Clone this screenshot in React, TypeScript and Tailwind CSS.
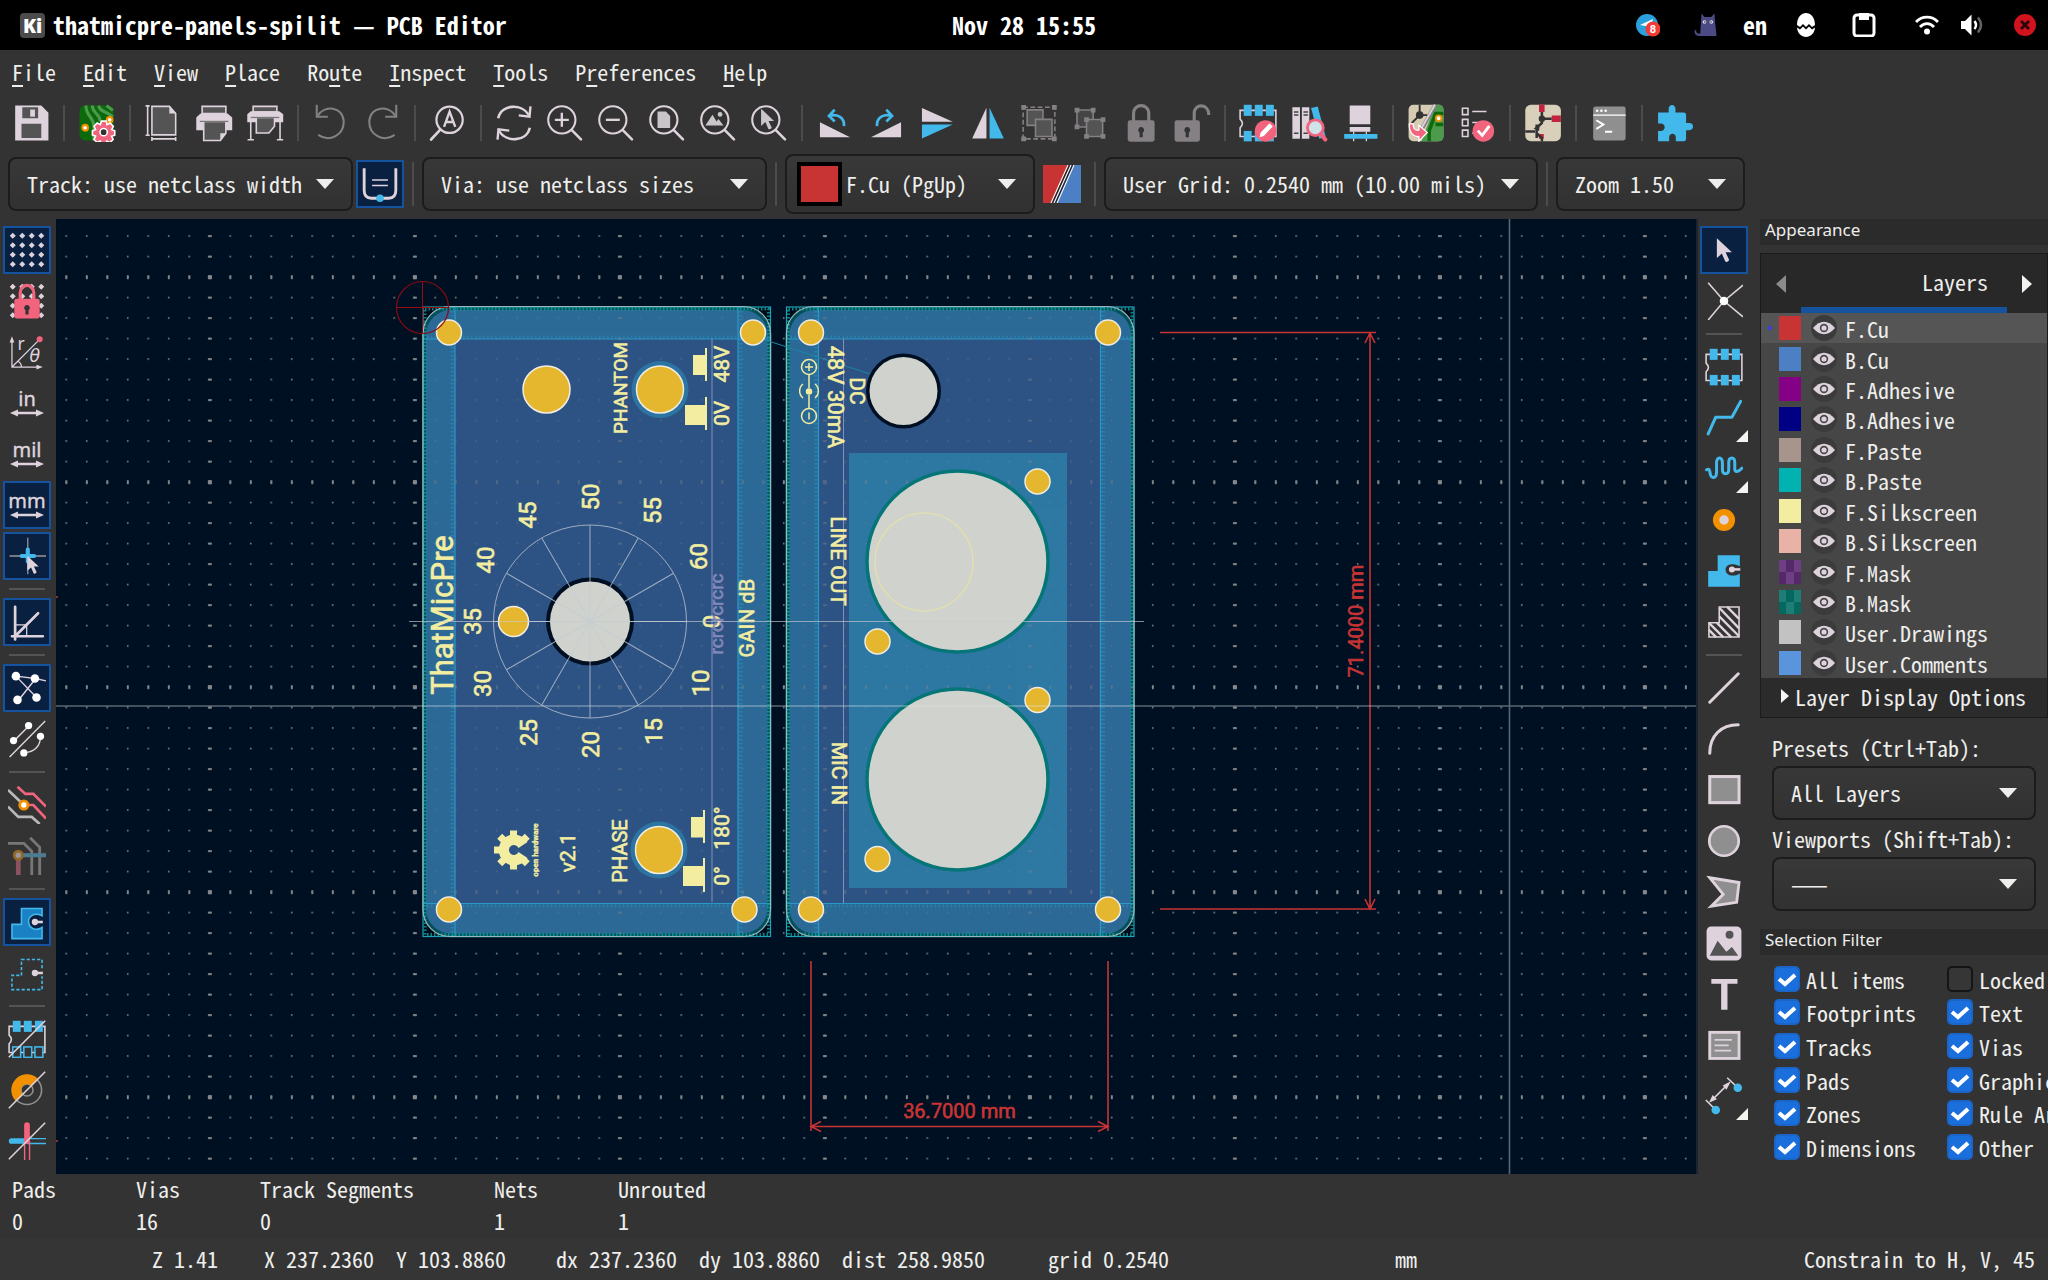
import React from 'react';
import clsx from 'clsx';

const LIGHT = '#ded3dd';
const BLUE = '#42b8eb';
const PINK = '#f2647e';
const GOLD = '#e5b72f';
const SILK = '#f2eda1';
const HOLE = '#d0d3cd';

const mono = "font-['Noto_Sans_Mono_CJK_SC','Noto_Sans_Mono_CJK_JP','DejaVu_Sans_Mono',monospace]";

interface IconProps {
    children: React.ReactNode;
    size?: string;
}

const Icon = ({ children, size = 'size-[38px]' }: IconProps) => (
    <svg viewBox="0 0 24 24" fill="none" className={clsx('shrink-0', size)} aria-hidden="true">
        {children}
    </svg>
);

const Lens = ({ children }: { children?: React.ReactNode }) => (
    <Icon>
        <ellipse cx="10" cy="10" rx="8.6" ry="8.6" stroke={LIGHT} strokeWidth="1.3" />
        <path d="M16.3 16.5 L22.1 22.4" stroke={LIGHT} strokeWidth="1.6" strokeLinecap="round" />
        {children}
    </Icon>
);

const Footprint = ({ hollow = false }: { hollow?: boolean }) => (
    <>
        <path d="M.7 4 H23.3 V20.5 H.7 V15 Q3.6 12.3 .7 9.6 Z" stroke={LIGHT} strokeWidth="1" />
        {[3, 10, 17].map((x) => (
            <React.Fragment key={x}>
                <rect x={x} y="0.5" width="5" height="7" fill={BLUE} />
                <rect x={x} y="17" width="5" height="6.6" fill={hollow ? '#333333' : BLUE} stroke={BLUE} strokeWidth={hollow ? 1 : 0} />
            </React.Fragment>
        ))}
    </>
);

const Units = ({ label }: { label: string }) => (
    <svg viewBox="0 0 38 38" className="size-[38px]" aria-hidden="true">
        <text x="19" y="22" textAnchor="middle" fontSize="20" fill={LIGHT} stroke={LIGHT} strokeWidth="0.4" fontFamily="Noto Sans, sans-serif">{label}</text>
        <path d="M2 29 L10 25.5 V27.8 H28 V25.5 L36 29 L28 32.5 V30.3 H10 V32.5 Z" fill={LIGHT} />
    </svg>
);

const DotGrid = () => (
    <>
        {[3, 9, 15, 21].map((y) => [3, 9, 15, 21].map((x) => (
            <path key={`${x}-${y}`} d={`M${x} ${y - 1.9} l1.9 1.9 l-1.9 1.9 l-1.9 -1.9 Z`} fill={LIGHT} />
        )))}
    </>
);

const arrowHead = 'M0 0 V13.2 L3.3 10.3 L5.6 15.6 Q7 16.4 8.2 14.6 L5.8 9.4 H10 Z';

const topTools: { name: string; icon?: React.ReactNode }[] = [
    {
        name: 'Save',
        icon: (
            <Icon>
                <path d="M2 1 H18.5 L23 5.5 V23 H2 Z" fill={LIGHT} />
                <path d="M6.5 2 H16.5 V9 H6.5 Z M6 12.5 H18.5 V21.5 H6 Z" fill="#545454" />
                <path d="M11.5 3.5 H14.5 V8 H11.5 Z" fill={LIGHT} />
            </Icon>
        ),
    },
    { name: '|' },
    {
        name: 'Board Setup',
        icon: (
            <Icon>
                <rect x="1" y="1" width="21.5" height="22" rx="3.5" fill="#0c6a0c" />
                <path d="M5 1 C5 8 10 8 10 14 V23 M9 1 C9 6 14 6 14 11 M13 1 C14 5 17 4 22 8 M18 1 L22 4" stroke="#4c9b4c" strokeWidth="1.9" />
                <circle cx="4.5" cy="15" r="1.8" fill="#fff" stroke="#f29100" strokeWidth="1.3" />
                <circle cx="20" cy="10" r="1.8" fill="#fff" stroke="#f29100" strokeWidth="1.3" />
                <g stroke="#fff" strokeWidth="1">
                    <path d="M14.8 10.8 h3 l.5 2.2 l2-1 l2 2.2 l-1 1.9 l1.9.8 v2.8 l-2 .7 l1 2 l-2 2 l-2-1 l-.8 2 h-2.6 l-.7-2 l-2 .9 l-2-2 l1-2 l-2-.7 v-2.7 l2-.8 l-1-2 l2-2.1 l2 1 Z" fill={PINK} />
                    <circle cx="16.2" cy="17.8" r="2.3" fill="#333" />
                </g>
            </Icon>
        ),
    },
    { name: '|' },
    {
        name: 'Page Settings',
        icon: (
            <Icon>
                <path d="M5 1.5 H16 L20 6 V19.5 H5 Z" fill="#545454" stroke={LIGHT} strokeWidth="1" />
                <path d="M16 1 L20.5 6 H16 Z" fill={LIGHT} />
                <path d="M2.3 1.5 V19.5 M1 1.2 H3.6 M1 19.7 H3.6 M5 22 H20 M5 20.8 V23.4 M20 20.8 V23.4" stroke={LIGHT} />
            </Icon>
        ),
    },
    {
        name: 'Print',
        icon: (
            <Icon>
                <path d="M4.5 1.5 H19.5 V6 H4.5 Z" fill="#545454" stroke={LIGHT} />
                <path d="M3.5 6 H20.5 L23.5 8.5 V16.5 H.8 V8.5 Z" fill={LIGHT} />
                <path d="M5.5 11 H19.5 V18.5 L16 23 H5.5 Z" fill="#545454" stroke={LIGHT} />
                <path d="M3 11 H21" stroke="#777" strokeWidth=".8" />
                <path d="M16 18.5 H19.5 L16 23 Z" fill={LIGHT} />
            </Icon>
        ),
    },
    {
        name: 'Plot',
        icon: (
            <Icon>
                <path d="M4.5 1.5 H19.5 V5 H4.5 Z" fill="#545454" stroke={LIGHT} />
                <path d="M3 4.5 H21 L23.5 6.5 V11.5 H.8 V6.5 Z" fill={LIGHT} />
                <path d="M6.5 8.5 H18 V14 L14.5 18.3 H6.5 Z" fill="#545454" stroke={LIGHT} />
                <path d="M3 8.5 H21" stroke="#777" strokeWidth=".8" />
                <path d="M3 11 V23 M21.5 11 V23 M1 22.6 H5 M19.5 22.6 H23.5" stroke={LIGHT} />
            </Icon>
        ),
    },
    { name: '|' },
    {
        name: 'Undo',
        icon: (
            <Icon>
                <path d="M3.5 7.5 C8 .5 19 1.5 20 10.5 C20.5 19.5 11 24.5 4 19.5" stroke="#848084" strokeWidth="1.3" />
                <path d="M3 .5 V8 H10" stroke="#848084" strokeWidth="1.3" />
            </Icon>
        ),
    },
    {
        name: 'Redo',
        icon: (
            <Icon>
                <path d="M20.5 7.5 C16 .5 5 1.5 4 10.5 C3.5 19.5 13 24.5 20 19.5" stroke="#848084" strokeWidth="1.3" />
                <path d="M21 .5 V8 H14" stroke="#848084" strokeWidth="1.3" />
            </Icon>
        ),
    },
    { name: '|' },
    {
        name: 'Find',
        icon: (
            <Icon>
                <circle cx="13" cy="10" r="8.3" stroke={LIGHT} strokeWidth="1.4" />
                <path d="M7 16.3 L1.3 22.4" stroke={LIGHT} strokeWidth="1.7" strokeLinecap="round" />
                <path d="M9.5 14.5 L13 4.8 L16.6 14.5 M10.6 11.4 H15.4" stroke={LIGHT} strokeWidth="1.5" />
            </Icon>
        ),
    },
    { name: '|' },
    {
        name: 'Refresh',
        icon: (
            <Icon>
                <path d="M2 9 C4 0 17 -.5 21.5 7 M22 15 C20 24 7 24.5 2.5 17" stroke={LIGHT} strokeWidth="1.6" />
                <path d="M22.4 1.5 L21.8 8 L15 7.2 M1.6 22.5 L2.2 16 L9 16.8" stroke={LIGHT} strokeWidth="1.5" />
            </Icon>
        ),
    },
    { name: 'Zoom In', icon: <Lens><path d="M10 5.6 V14.4 M5.6 10 H14.4" stroke={LIGHT} strokeWidth="1.5" /></Lens> },
    { name: 'Zoom Out', icon: <Lens><path d="M5.6 10 H14.4" stroke={LIGHT} strokeWidth="1.5" /></Lens> },
    { name: 'Zoom to Fit', icon: <Lens><path d="M6 4.8 H11.3 L14 7.5 V15.2 H6 Z" fill="#c9c6c9" /></Lens> },
    {
        name: 'Zoom to Objects',
        icon: <Lens><path d="M4 13.6 L8.5 6.8 L11.1 11 L12.3 9.5 L15.5 13.6 Z" fill="#c9c6c9" /><circle cx="13.3" cy="6.6" r="1.5" fill="#c9c6c9" /></Lens>,
    },
    {
        name: 'Zoom to Selection',
        icon: <Lens><path d={arrowHead} transform="translate(7 3) scale(.82)" fill="#c9c6c9" /></Lens>,
    },
    { name: '|' },
    {
        name: 'Rotate Counterclockwise',
        icon: (
            <Icon>
                <path d="M2.5 11.5 V21 H21.5 Z" fill={LIGHT} />
                <path d="M17.7 14 C18 8 13 6.2 8.5 7.5 M11.8 3.5 L8.2 7.6 L11.8 11" stroke={BLUE} strokeWidth="1.7" />
            </Icon>
        ),
    },
    {
        name: 'Rotate Clockwise',
        icon: (
            <Icon>
                <path d="M21.5 11.5 V21 H2.5 Z" fill={LIGHT} />
                <path d="M6.3 14 C6 8 11 6.2 15.5 7.5 M12.2 3.5 L15.8 7.6 L12.2 11" stroke={BLUE} strokeWidth="1.7" />
            </Icon>
        ),
    },
    { name: 'Mirror Vertically', icon: <Icon><path d="M2.5 2.5 L22 11.2 H2.5 Z" fill={LIGHT} /><path d="M2.5 13 H22 L2.5 21.8 Z" fill={BLUE} /></Icon> },
    { name: 'Mirror Horizontally', icon: <Icon><path d="M11 2.3 V21.8 H2 Z" fill={LIGHT} /><path d="M13 2.3 V21.8 H22 Z" fill={BLUE} /></Icon> },
    {
        name: 'Group',
        icon: (
            <Icon>
                <rect x="2" y="2" width="20" height="20" stroke="#848084" strokeDasharray="3 1.6" />
                <path d="M4.5 3.7 H14.5 V13.5 H4.5 Z" fill="#545454" stroke="#848084" />
                <path d="M9.8 9.7 H20.2 V20.5 H9.8 Z" fill="#545454" stroke="#848084" />
                <path d="M.8 .6 h3 v3 h-3 Z M20.2 .6 h3 v3 h-3 Z M.8 20.6 h3 v3 h-3 Z M20.2 20.6 h3 v3 h-3 Z" fill="#848084" />
            </Icon>
        ),
    },
    {
        name: 'Ungroup',
        icon: (
            <Icon>
                <path d="M3.8 3.8 H14 V14.5 H3.8 Z" fill="#454545" stroke="#848084" />
                <path d="M9.8 9.8 H20 V20.5 H9.8 Z" fill="#545454" stroke="#848084" />
                <path d="M2.3 2.3 h3 v3 h-3 Z M12.5 2.3 h3 v3 h-3 Z M2.3 13 h3 v3 h-3 Z M8.3 8.3 h3 v3 h-3 Z M18.7 8.3 h3 v3 h-3 Z M8.3 19 h3 v3 h-3 Z M18.7 19 h3 v3 h-3 Z" fill="#848084" />
            </Icon>
        ),
    },
    {
        name: 'Lock',
        icon: (
            <Icon>
                <path d="M7.3 11 V6 C7.3 -.6 16.9 -.6 16.9 6 V11" stroke="#848084" strokeWidth="2" />
                <rect x="3.6" y="10.3" width="17" height="13.5" rx="1.5" fill="#848084" />
                <path d="M12.1 14.5 a1.9 1.9 0 0 1 1 3.5 V21 h-2 V18 a1.9 1.9 0 0 1 1-3.5" fill="#333" />
            </Icon>
        ),
    },
    {
        name: 'Unlock',
        icon: (
            <Icon>
                <path d="M13.4 11 V6 C13.4 -.6 22.6 -.6 22.6 7" stroke="#848084" strokeWidth="2" />
                <rect x="1" y="10.3" width="16" height="13.5" rx="1.5" fill="#848084" />
                <path d="M9 14.5 a1.9 1.9 0 0 1 1 3.5 V21 H8 V18 a1.9 1.9 0 0 1 1-3.5" fill="#333" />
            </Icon>
        ),
    },
    { name: '|' },
    {
        name: 'Footprint Editor',
        icon: (
            <Icon>
                <Footprint />
                <circle cx="16.8" cy="17" r="6.8" fill={PINK} />
                <path d="M13 21 L13.7 18 L19.3 12.2 L21.3 14.2 L15.7 20.2 Z" fill="#fff" />
            </Icon>
        ),
    },
    {
        name: 'Footprint Library Browser',
        icon: (
            <Icon>
                <path d="M1.5 2 H6.3 V22 H1.5 Z M7.5 2 H12.2 V22 H7.5 Z" fill={LIGHT} />
                <path d="M13.3 2.5 L17.5 1.5 L22.5 20.5 L18.5 22 Z" fill={BLUE} />
                <path d="M2.5 5 H5.3 M2.5 7 H5.3 M8.5 5 H11.3 M8.5 7 H11.3 M2.5 18.5 H5.3 M8.5 18.5 H11.3" stroke="#444" strokeWidth=".9" />
                <circle cx="16" cy="15" r="5" fill="#cfe3ea" stroke={PINK} strokeWidth="1.8" />
                <path d="M19.5 19 L22.3 22.4" stroke={PINK} strokeWidth="2.6" strokeLinecap="round" />
            </Icon>
        ),
    },
    {
        name: '3D Viewer',
        icon: (
            <Icon>
                <path d="M5.5 1 H18.5 V12.8 H5.5 Z M5.5 14.5 H18.5 V17.5 H5.5 Z" fill={LIGHT} />
                <path d="M8 17.5 V23.5 M16 17.5 V23.5" stroke={LIGHT} strokeWidth=".8" />
                <path d="M2 19 H23 V22 H2 Z" fill={BLUE} />
            </Icon>
        ),
    },
    { name: '|' },
    {
        name: 'Update PCB from Schematic',
        icon: (
            <Icon>
                <rect x="1" y=".5" width="22" height="23" rx="3" fill="#d6ccb4" />
                <path d="M18 .5 H20 Q23 .5 23 3.5 V20.5 Q23 23.5 20 23.5 H9 Z" fill="#4c9b4c" />
                <path d="M23 6 H18 L14 17 V23.5 M23 13 H18" stroke="#0c6a0c" strokeWidth="2.2" />
                <path d="M8 0.5 V8 M8 7 L3 12 M8 7 H13" stroke="#333" strokeWidth="1.2" />
                <circle cx="8" cy="7" r="2.4" fill="#333" />
                <path d="M18 .5 L9.5 15.5" stroke="#848084" strokeWidth="2.6" />
                <path d="M17.6 .5 L9 15.5" stroke={LIGHT} strokeWidth="1.2" />
                <circle cx="20" cy="9" r="1.8" fill="#fff" stroke="#f29100" strokeWidth="1.2" />
                <path d="M1.5 12.5 C1 18 4 21 7.5 20.5 V23.5 L12.8 18 L7.5 13.5 V16.5 C4.5 17 4 15 3.8 12.5 Z" fill={PINK} stroke="#fff" strokeWidth=".8" />
            </Icon>
        ),
    },
    {
        name: 'Design Rules Checker',
        icon: (
            <Icon>
                <path d="M2.8 2.7 H6.3 V6.7 H2.8 Z M2.8 9.7 H6.3 V13.7 H2.8 Z M2.8 16.5 H6.3 V20.5 H2.8 Z M9 4.7 H18 M9 11.7 H13 M9 18.5 H11" stroke={LIGHT} strokeWidth="1" />
                <circle cx="16" cy="17" r="6.8" fill={PINK} />
                <path d="M12.5 16.8 L15.3 19.8 L19.8 13.8" stroke="#fff" strokeWidth="1.8" />
            </Icon>
        ),
    },
    { name: '|' },
    {
        name: 'Schematic Editor',
        icon: (
            <Icon>
                <rect x=".8" y=".5" width="22.5" height="23" rx="3.5" fill="#d9d0bb" />
                <path d="M9.5 .5 H13 V5 H9.5 Z M17.5 7.3 H23.3 V11.3 H17.5 Z M9.5 19 H12.5 V22 H9.5 Z" fill="#c2233f" />
                <path d="M11.3 5 V12 L8 15 M11.3 9.3 H17.5 M.8 17.3 H7 M8 13 V21.5 M8 18.5 L11.3 21.5 V23.5" stroke="#333" strokeWidth="1.6" />
                <circle cx="11.3" cy="9.3" r="2" fill="#333" />
                <path d="M6 15.5 L10 13 L9.5 17 Z" fill="#333" />
            </Icon>
        ),
    },
    { name: '|' },
    {
        name: 'Scripting Console',
        icon: (
            <Icon>
                <rect x="2" y="1.5" width="20.5" height="21.5" rx="1.5" fill="#8f8f8f" />
                <path d="M2 7 H22.5" stroke="#fff" strokeWidth=".8" />
                <circle cx="4.5" cy="4.2" r=".8" fill="#fff" />
                <circle cx="7.2" cy="4.2" r=".8" fill="#fff" />
                <circle cx="9.9" cy="4.2" r=".8" fill="#fff" />
                <path d="M4 10.3 L8.5 13 L4 15.7 M9.5 17.5 H14" stroke="#fff" strokeWidth="1.2" />
            </Icon>
        ),
    },
    { name: '|' },
    {
        name: 'Plugins',
        icon: (
            <Icon>
                <path d="M1.3 5.3 H8 V3 C8 -.2 12.3 -.2 12.3 3 V5.3 H17.5 Q19 5.3 19 6.8 V12 H21 C24.2 12 24.2 16.5 21 16.5 H19 V21.8 Q19 23.5 17.5 23.5 H12.5 V21 C12.5 18 8.3 18 8.3 21 V23.5 H1.3 V17 H3 C6.3 17 6.3 12.3 3 12.3 H1.3 Z" fill={BLUE} />
            </Icon>
        ),
    },
];

interface Tool {
    name: string;
    active?: boolean;
    corner?: boolean;
    icon?: React.ReactNode;
}

const leftTools: Tool[] = [
    { name: 'Show Grid', active: true, icon: <Icon><DotGrid /></Icon> },
    {
        name: 'Grid Overrides',
        icon: (
            <Icon>
                <DotGrid />
                <path d="M7.7 11 V7 C7.7 .5 16.3 .5 16.3 7 V11" stroke={PINK} strokeWidth="2" />
                <rect x="4" y="10.5" width="16" height="12.5" rx="1.3" fill={PINK} />
                <path d="M12 14.5 a1.8 1.8 0 0 1 1 3.3 V20.5 h-2 V17.8 a1.8 1.8 0 0 1 1-3.3" fill="#333" />
            </Icon>
        ),
    },
    {
        name: 'Polar Coordinates',
        icon: (
            <Icon>
                <path d="M2.5 4 V21.5 H20 M2.5 21.5 L19.5 4.5 M6 17.5 Q8.5 19 8.5 21.5" stroke={LIGHT} strokeWidth=".8" />
                <path d="M2.5 2 L4 6 H1 Z M22 21.5 L18 20 V23 Z" fill={LIGHT} />
                <circle cx="20" cy="4" r="1.9" fill={PINK} />
                <text x="6" y="11" fontSize="11" fill={LIGHT} fontFamily="Noto Sans, sans-serif">r</text>
                <text x="13.5" y="18.5" fontSize="11" fontStyle="italic" fill={LIGHT} fontFamily="DejaVu Sans, sans-serif">θ</text>
            </Icon>
        ),
    },
    { name: 'Inches', icon: <Units label="in" /> },
    { name: 'Mils', icon: <Units label="mil" /> },
    { name: 'Millimeters', active: true, icon: <Units label="mm" /> },
    {
        name: 'Full-Window Crosshairs',
        active: true,
        icon: (
            <Icon>
                <path d="M12.5 .5 V23.5 M1 12 H24" stroke="#9a969a" strokeWidth=".8" />
                <path d="M12.5 8 V15.5 M8.6 12 H16.5" stroke={BLUE} strokeWidth="2.6" strokeLinecap="round" />
                <path d={arrowHead} transform="translate(12.2 11.8) scale(.72)" fill={LIGHT} />
            </Icon>
        ),
    },
    { name: '|' },
    {
        name: 'Constrain to 45 Degrees',
        active: true,
        icon: (
            <Icon>
                <path d="M4.5 2.5 V23 M2.5 21 H22 M4.5 21 L19 6.5" stroke={LIGHT} strokeWidth="1.7" strokeLinecap="round" />
                <path d="M4.5 13.8 H11.8 V21" stroke={LIGHT} strokeWidth=".8" />
            </Icon>
        ),
    },
    { name: '|' },
    {
        name: 'Show Ratsnest',
        active: true,
        icon: (
            <Icon>
                <path d="M5 4.5 L17.5 6 L6 20.5 M5 4.5 L18.5 18.5 M17.5 6 L24 7.5" stroke={LIGHT} strokeWidth=".9" />
                <circle cx="5" cy="4.5" r="2.7" fill="#fff" />
                <circle cx="17" cy="6" r="2.7" fill="#fff" />
                <circle cx="6" cy="19.5" r="2.7" fill="#fff" />
                <circle cx="18" cy="18" r="2.7" fill="#fff" />
            </Icon>
        ),
    },
    {
        name: 'Curved Ratsnest',
        icon: (
            <Icon>
                <path d="M1 23.3 L23.5 .7 M3.5 13.5 L13 4 M10.5 20.5 C17 20.5 20.5 16 20.5 10.5" stroke={LIGHT} strokeWidth=".9" />
                <circle cx="3.5" cy="13" r="2.3" fill="#fff" />
                <circle cx="13" cy="3.5" r="2.3" fill="#fff" />
                <circle cx="10" cy="20.8" r="2.3" fill="#fff" />
                <circle cx="20.5" cy="10.3" r="2.3" fill="#fff" />
            </Icon>
        ),
    },
    { name: '|' },
    {
        name: 'Highlight Net',
        icon: (
            <Icon>
                <path d="M0 2.5 L9 11 M0 13 L6.5 19.5 H15 L20 24" stroke="#b9b9b9" strokeWidth="1.7" />
                <path d="M6 .5 L11 5 H16 L24 13 M11 12 H16 L24 20.5" stroke={PINK} strokeWidth="1.7" />
                <circle cx="10" cy="12" r="2.6" fill="#fff" stroke="#f29100" strokeWidth="1.8" />
            </Icon>
        ),
    },
    {
        name: 'Net Colors',
        icon: (
            <Icon>
                <path d="M0 4 H10 L15 9 V24 M14 .5 L20 6.5 V24" stroke="#777" strokeWidth="1.8" />
                <path d="M6.5 12 V24" stroke="#8b5160" strokeWidth="3" />
                <path d="M7 11.5 H24" stroke="#4a7d90" strokeWidth="2.6" />
                <circle cx="6.5" cy="11.5" r="2.6" fill="#9a969a" stroke="#92672a" strokeWidth="1.8" />
            </Icon>
        ),
    },
    { name: '|' },
    {
        name: 'Draw Zone Fills',
        active: true,
        icon: (
            <Icon>
                <path d="M8.5 3.5 H21.5 V8 C16 5.5 12.5 9 13 12.2 C13.5 16 17.5 18 21.5 15.5 V22.5 H2.5 V13.5 H8.5 Z" fill="#1a81c4" stroke={BLUE} />
                <circle cx="17" cy="12" r="2" fill={LIGHT} />
                <path d="M17 12 H22" stroke={LIGHT} strokeWidth="1.6" />
            </Icon>
        ),
    },
    {
        name: 'Draw Zone Outlines',
        icon: (
            <Icon>
                <path d="M8.5 3.5 H21.5 V22.5 H2.5 V13.5 H8.5 Z" stroke={BLUE} strokeDasharray="2 1.3" />
                <path d="M16 12 H22" stroke="#333" strokeWidth="4" />
                <circle cx="17" cy="12" r="2" fill={LIGHT} />
                <path d="M17 12 H22" stroke={LIGHT} strokeWidth="1.6" />
            </Icon>
        ),
    },
    { name: '|' },
    { name: 'Sketch Footprints', icon: <Icon><Footprint hollow /><path d="M.5 23.5 L23.5 .5" stroke={LIGHT} strokeWidth="1" /></Icon> },
    {
        name: 'Sketch Pads',
        icon: (
            <Icon>
                <circle cx="12" cy="12" r="9.2" stroke="#8f8f8f" />
                <circle cx="12" cy="12" r="3.8" stroke="#8f8f8f" />
                <path d="M5 19 A9.7 9.7 0 0 1 19 5 L14.7 9.3 A3.8 3.8 0 0 0 9.3 14.7 Z" fill="#f29100" />
                <path d="M.5 23.5 L23.5 .5" stroke={LIGHT} strokeWidth="1" />
            </Icon>
        ),
    },
    {
        name: 'Sketch Tracks',
        icon: (
            <Icon>
                <path d="M2.3 12 H11 " stroke={BLUE} strokeWidth="3.6" strokeLinecap="round" />
                <path d="M12 10.5 H24 M12 13.6 H24" stroke={BLUE} strokeWidth=".9" />
                <path d="M12 2 V12" stroke={PINK} strokeWidth="3.6" strokeLinecap="round" />
                <path d="M10.5 12 V24 M13.6 12 V24" stroke={PINK} strokeWidth=".9" />
                <path d="M.5 23.5 L23.5 .5" stroke={LIGHT} strokeWidth="1" />
            </Icon>
        ),
    },
];

const rightTools: Tool[] = [
    { name: 'Select', active: true, icon: <Icon><path d={arrowHead} transform="translate(7.5 4.5) scale(.95)" fill={LIGHT} /></Icon> },
    {
        name: 'Local Ratsnest',
        icon: (
            <Icon>
                <path d="M2 .5 L12 12 L24 2 M2 24 L12 12 L24 22" stroke={LIGHT} strokeWidth="1" />
                <circle cx="12" cy="12" r="2.7" fill="#fff" />
            </Icon>
        ),
    },
    { name: '|' },
    { name: 'Place Footprint', icon: <Icon><Footprint /></Icon> },
    { name: 'Route Track', corner: true, icon: <Icon><path d="M2 22 L6.8 11.5 H17 L22.5 1.5" stroke={BLUE} strokeWidth="1.9" strokeLinecap="round" strokeLinejoin="round" /></Icon> },
    {
        name: 'Tune Length',
        corner: true,
        icon: <Icon><path d="M1 12.5 C3 11.5 3 13 3.3 15 C3.8 18.5 7.3 18 7.3 14 V8.5 C7.3 4 11 4 11 8 V12 C11 16 15 16 15 12 V8 C15 4 18.8 4 18.8 8 V12 C18.8 14.5 21 14 23.3 11.5" stroke={BLUE} strokeWidth="1.9" strokeLinecap="round" /></Icon>,
    },
    { name: 'Place Via', icon: <Icon><circle cx="12" cy="12" r="5" fill={LIGHT} stroke="#f29100" strokeWidth="4" /></Icon> },
    {
        name: 'Draw Zone',
        icon: (
            <Icon>
                <path d="M8 2 H22 V9 C17 6.5 13 8 13 11.2 C13 15 18 16 22 13.5 V22 H2 V12 H8 Z" fill={BLUE} />
                <circle cx="17" cy="11" r="1.9" fill={LIGHT} />
                <path d="M17 11 H22.3" stroke={LIGHT} strokeWidth="1.6" />
            </Icon>
        ),
    },
    {
        name: 'Rule Area',
        icon: (
            <Icon>
                <path d="M9 2.5 H21.5 V21.5 H2.5 V12.5 H9 Z" stroke={LIGHT} />
                <path d="M9 3 L21.5 16 M14 2.5 L21.5 10 M9 8.5 L21.5 21 M7.5 12.5 L16.5 21.5 M2.5 12.5 L11.5 21.5 M2.5 17 L7 21.5" stroke={LIGHT} strokeWidth="1.5" />
            </Icon>
        ),
    },
    { name: '|' },
    { name: 'Draw Line', icon: <Icon><path d="M3 21 L21 3" stroke={LIGHT} strokeWidth="1.9" strokeLinecap="round" /></Icon> },
    { name: 'Draw Arc', icon: <Icon><path d="M3 21 C3 10 10 3 21 3" stroke={LIGHT} strokeWidth="1.9" strokeLinecap="round" /></Icon> },
    { name: 'Draw Rectangle', icon: <Icon><rect x="3" y="3.5" width="18.5" height="16.5" fill="#8f8f8f" stroke={LIGHT} strokeWidth="1.9" /></Icon> },
    { name: 'Draw Circle', icon: <Icon><circle cx="12" cy="12" r="9.3" fill="#8f8f8f" stroke={LIGHT} strokeWidth="1.7" /></Icon> },
    { name: 'Draw Polygon', icon: <Icon><path d="M3 3 L21.5 6 L20 18.5 L4 21 L11.5 13.5 Z" fill="#8f8f8f" stroke={LIGHT} strokeWidth="1.8" /></Icon> },
    {
        name: 'Place Image',
        icon: (
            <Icon>
                <rect x="1" y="1.5" width="22" height="21.5" rx="3" fill={LIGHT} />
                <path d="M3 20 L8 10.5 L13.5 17.5 L17 14.5 L21 20 Z" fill="#545454" />
                <circle cx="15.5" cy="6.8" r="2.5" fill="#545454" />
            </Icon>
        ),
    },
    { name: 'Place Text', icon: <Icon><path d="M4 2.5 H20.5 V5.5 H14.2 V22 H10.2 V5.5 H4 Z" fill={LIGHT} /></Icon> },
    {
        name: 'Text Box',
        icon: (
            <Icon>
                <rect x="3" y="4" width="18.5" height="16.5" fill="#8f8f8f" stroke={LIGHT} strokeWidth="1.8" />
                <path d="M6 8.8 H17 M6 12.2 H15 M6 15.6 H16.5" stroke={LIGHT} strokeWidth="1.1" />
            </Icon>
        ),
    },
    {
        name: 'Dimension',
        corner: true,
        icon: (
            <Icon>
                <path d="M4 15 L15 4 M0.5 14.5 L7 21 M14 .5 L21 7" stroke={LIGHT} strokeWidth="1" />
                <path d="M2.5 16.3 L7.5 14 L4.8 11.3 Z M16.3 2.7 L13.6 8 L11.2 5.3 Z" fill={LIGHT} />
                <circle cx="20.7" cy="6.8" r="2.7" fill={BLUE} />
                <circle cx="6.8" cy="20.8" r="2.7" fill={BLUE} />
            </Icon>
        ),
    },
];

const ToolColumn = ({ tools, label }: { tools: Tool[]; label: string }) => (
    <nav aria-label={label} className="flex shrink-0 flex-col items-center gap-[3px] pt-[7px]">
        {tools.map((tool, i) =>
            tool.name === '|' ? (
                <div key={i} className="flex h-3 items-center"><div className="h-[2px] w-9 bg-[#545454]" /></div>
            ) : (
                <button
                    key={i}
                    aria-label={tool.name}
                    className={clsx('relative flex size-12 items-center justify-center', tool.active && 'border-2 border-[#15539e] bg-[#0a2040]')}
                >
                    {tool.icon}
                    {tool.corner && (
                        <svg viewBox="0 0 12 12" className="absolute right-0 bottom-0 size-3"><path d="M12 0 V12 H0 Z" fill="#f4f4f0" /></svg>
                    )}
                </button>
            )
        )}
    </nav>
);

interface ComboProps {
    label: string;
    value: string;
    className?: string;
    children?: React.ReactNode;
}

const Combo = ({ label, value, className, children }: ComboProps) => (
    <div className={clsx('relative flex shrink-0 items-center rounded-lg border-2 border-[#1c1c1c] bg-linear-to-b from-[#383838] to-[#313131]', className)}>
        {children}
        <select aria-label={label} className="w-full appearance-none bg-transparent pr-10 pb-[2px] pl-[17px] leading-9 text-[#eeeeec]">
            <option>{value}</option>
        </select>
        <svg viewBox="0 0 18 12" className="pointer-events-none absolute right-[17px] h-3 w-[18px]"><path d="M0 1 H18 L9 11 Z" fill="#eeeeec" /></svg>
    </div>
);

const Divider = () => <div className="h-11 w-[2px] shrink-0 bg-[#4c4c4c]" />;

const menus: [string, string, string][] = [
    ['', 'F', 'ile'],
    ['', 'E', 'dit'],
    ['', 'V', 'iew'],
    ['', 'P', 'lace'],
    ['Ro', 'u', 'te'],
    ['', 'I', 'nspect'],
    ['', 'T', 'ools'],
    ['P', 'r', 'eferences'],
    ['', 'H', 'elp'],
];

const layers = [
    { name: 'F.Cu', color: 'bg-[#c83434]' },
    { name: 'B.Cu', color: 'bg-[#4d7fc4]' },
    { name: 'F.Adhesive', color: 'bg-[#840084]' },
    { name: 'B.Adhesive', color: 'bg-[#000084]' },
    { name: 'F.Paste', color: 'bg-[#a6948d]' },
    { name: 'B.Paste', color: 'bg-[#00b3b0]' },
    { name: 'F.Silkscreen', color: 'bg-[#f2eda1]' },
    { name: 'B.Silkscreen', color: 'bg-[#e8b2a7]' },
    { name: 'F.Mask', color: 'bg-[#54296a]', check: 'bg-[#6e3f82]' },
    { name: 'B.Mask', color: 'bg-[#04685f]', check: 'bg-[#1e7e75]' },
    { name: 'User.Drawings', color: 'bg-[#c2c2c2]' },
    { name: 'User.Comments', color: 'bg-[#5994dc]' },
];

const filters: [string, boolean][] = [
    ['All items', true],
    ['Locked', false],
    ['Footprints', true],
    ['Text', true],
    ['Tracks', true],
    ['Vias', true],
    ['Pads', true],
    ['Graphics', true],
    ['Zones', true],
    ['Rule Areas', true],
    ['Dimensions', true],
    ['Other', true],
];

interface SilkProps {
    x: number;
    y: number;
    size?: number;
    turn?: number;
    fill?: string;
    children: string;
}

const Silk = ({ x, y, size = 21, turn = -90, fill = SILK, children }: SilkProps) => (
    <text transform={`translate(${x} ${y}) rotate(${turn})`} fontSize={size} textAnchor="middle" fill={fill} stroke={fill} strokeWidth="0.6" fontFamily="Roboto, sans-serif">
        {children}
    </text>
);

const Pad = ({ x, y, r = 12.5, halo = false }: { x: number; y: number; r?: number; halo?: boolean }) => (
    <>
        {halo && <circle cx={x} cy={y} r={r + 5} fill="#2c75a3" />}
        <circle cx={x} cy={y} r={r} fill={GOLD} stroke="#f0ece4" strokeWidth="1.5" />
    </>
);

// x positions of the outer edge and of the inner rails, both panels share the y range
const Panel = ({ x1, x2, in1, in2 }: { x1: number; x2: number; in1: number; in2: number }) => (
    <>
        <rect x={x1} y="307" width={x2 - x1} height="629.5" fill="#000c1c" />
        <rect x={x1 + 1} y="308" width={x2 - x1 - 2} height="627.5" rx="27" fill="#2c6997" stroke="#02505a" strokeWidth="4" />
        <rect x={in1} y="339" width={in2 - in1} height="564.5" fill="#2d5384" />
        <path d={`M${in1 - 2.5} 307 V936 M${in2 + 2.5} 307 V936`} stroke="#2791b8" strokeWidth="4" strokeDasharray="1.5 2.5" opacity=".6" />
        <path d={`M${x1} 337 H${x2} M${x1} 906 H${x2}`} stroke="#2791b8" strokeWidth="3" strokeDasharray="1.5 2.5" opacity=".6" />
        <path d={`M${in1} 307 V936 M${in2} 307 V936 M${x1} 339 H${x2} M${x1} 903.5 H${x2}`} stroke="#2b98c6" strokeWidth="1.2" />
        <rect x={x1 + 2} y="309" width={x2 - x1 - 4} height="625.5" stroke="#05a59f" strokeWidth="3" strokeDasharray="1.5 2" opacity=".8" fill="none" />
        <rect x={x1} y="307" width={x2 - x1} height="629.5" stroke="#1fa3b4" strokeWidth="1.2" fill="none" />
        <rect x={x1} y="306.5" width={x2 - x1} height="630" rx="27" stroke="#9fb4b8" strokeWidth="1.2" fill="none" />
    </>
);

const gridLayers = (
    <>
        <rect x="0" y="200" width="4000" height="3000" fill="url(#dots)" />
        <rect x="0" y="200" width="4000" height="3000" fill="url(#rows)" />
        <rect x="0" y="200" width="4000" height="3000" fill="url(#cols)" />
        <rect x="0" y="200" width="4000" height="3000" fill="url(#majors)" />
    </>
);

const gearTeeth = [45, 90, 135, 180, 225, 270, 315];

const BoardCanvas = () => (
    <svg className="block size-full" role="img" aria-label="Board">
        <defs>
            <pattern id="dots" x="413.9" y="276.2" width="20.5" height="20.5" patternUnits="userSpaceOnUse">
                <rect width="1.6" height="1.6" fill="#7f8386" />
            </pattern>
            <pattern id="rows" x="413.9" y="275.2" width="20.5" height="205" patternUnits="userSpaceOnUse">
                <rect width="1.8" height="4" fill="#85888a" />
            </pattern>
            <pattern id="cols" x="412.9" y="276.2" width="205" height="20.5" patternUnits="userSpaceOnUse">
                <rect width="4" height="1.8" fill="#85888a" />
            </pattern>
            <pattern id="majors" x="412.9" y="275.2" width="205" height="205" patternUnits="userSpaceOnUse">
                <rect width="4" height="4" fill="#85888a" />
            </pattern>
            <clipPath id="panels">
                <rect x="424" y="308" width="346" height="628" />
                <rect x="787" y="308" width="346" height="628" />
            </clipPath>
        </defs>
        <g transform="translate(-56 -219)">
            {gridLayers}
            <Panel x1={423} x2={770.5} in1={455} in2={738} />
            <Panel x1={786.5} x2={1134} in1={818.5} in2={1100.5} />
            <rect x="849" y="453" width="218" height="435" fill="#2e78a4" />
            <g clipPath="url(#panels)" opacity=".4">{gridLayers}</g>
            <path d="M712 339 V902 M843.5 339 V903" stroke="#8490b8" strokeWidth="1" />
            <path d="M753 336 L870 374" stroke="#1c86a4" strokeWidth="1" />

            {/* front panel */}
            <Pad x={449} y={332.5} />
            <Pad x={753} y={332.5} />
            <Pad x={449} y={909.5} />
            <Pad x={744.5} y={909.5} />
            <Pad x={546.5} y={389.5} r={23.5} />
            <Pad x={660} y={389.5} r={23.5} halo />
            <Pad x={659} y={850} r={23.5} halo />
            <circle cx="590" cy="621.5" r="44" fill="#000f22" />
            <circle cx="590" cy="621.5" r="40" fill={HOLE} />
            <g stroke="#c3cbd6" strokeWidth="1" opacity=".75">
                <circle cx="590" cy="621.5" r="96.5" fill="none" />
                {[0, 30, 60, 90, 120, 150].map((a) => (
                    <path key={a} d="M493.5 621.5 H686.5" transform={`rotate(${a} 590 621.5)`} />
                ))}
            </g>
            <Pad x={513.5} y={621.5} r={15} />
            <Silk x={453} y={615} size={31}>ThatMicPre</Silk>
            <Silk x={626.5} y={388} size={19}>PHANTOM</Silk>
            <Silk x={729} y={364}>48V</Silk>
            <Silk x={729} y={413.5}>0V</Silk>
            <Silk x={599} y={497} size={24}>50</Silk>
            <Silk x={536} y={515} size={24}>45</Silk>
            <Silk x={661} y={510.5} size={24}>55</Silk>
            <Silk x={494} y={560} size={24}>40</Silk>
            <Silk x={707} y={556.5} size={24}>60</Silk>
            <Silk x={481} y={621.5} size={24}>35</Silk>
            <Silk x={720} y={621.5} size={24}>0</Silk>
            <Silk x={491} y={683.5} size={24}>30</Silk>
            <Silk x={709} y={683} size={24}>10</Silk>
            <Silk x={537} y={732.5} size={24}>25</Silk>
            <Silk x={662} y={731.5} size={24}>15</Silk>
            <Silk x={599} y={744.5} size={24}>20</Silk>
            <Silk x={723} y={614} size={19} fill="#8187b8">rcrcrcrcrc</Silk>
            <Silk x={754} y={618}>GAIN dB</Silk>
            <Silk x={627} y={851} size={20}>PHASE</Silk>
            <Silk x={729} y={828}>180°</Silk>
            <Silk x={729} y={876}>0°</Silk>
            <Silk x={575} y={852.5}>v2.1</Silk>
            <path d="M693 355 H705 V348 H707 V381 H705 V375 H693 Z M685 405 H705 V397 H707 V430 H705 V425 H685 Z M691 817 H703 V810 H705 V843 H703 V837.5 H691 Z M683 866 H703 V858 H705 V892 H703 V886 H683 Z" fill={SILK} />
            <g transform="translate(513.5 850)">
                <path d="M5 -2 L14 -8 A15.5 15.5 0 1 0 14 8 L5 2 A5 5 0 1 1 5 -2 Z" fill={SILK} />
                {gearTeeth.map((a) => (
                    <rect key={a} x="13" y="-3.5" width="6.5" height="7" fill={SILK} transform={`rotate(${a})`} />
                ))}
                <text transform="translate(24.5 0) rotate(-90)" fontSize="8" fontWeight="700" textAnchor="middle" fill={SILK} stroke={SILK} strokeWidth="0.4" fontFamily="Roboto, sans-serif">open hardware</text>
            </g>

            {/* back panel */}
            <Pad x={811} y={332.5} />
            <Pad x={1108} y={332.5} />
            <Pad x={811} y={909.5} />
            <Pad x={1108} y={909.5} />
            <circle cx="903.5" cy="391" r="37.5" fill="#000f22" />
            <circle cx="903.5" cy="391" r="34" fill={HOLE} />
            <circle cx="957.5" cy="561.5" r="90.5" fill={HOLE} stroke="#067577" strokeWidth="3.5" />
            <circle cx="957.5" cy="779.5" r="90.5" fill={HOLE} stroke="#067577" strokeWidth="3.5" />
            <circle cx="924" cy="562" r="49" fill="none" stroke="#e8e2a4" strokeWidth="1.2" />
            <Pad x={1037.5} y={481.5} />
            <Pad x={877.5} y={641.5} />
            <Pad x={1037.5} y={700} />
            <Pad x={877.5} y={859} />
            <Silk x={827.5} y={397} size={22} turn={90}>48V 30mA</Silk>
            <Silk x={850} y={391} size={21} turn={90}>DC</Silk>
            <Silk x={831} y={561} turn={90}>LINE OUT</Silk>
            <Silk x={832} y={773.5} turn={90}>MIC IN</Silk>
            <g fill="none" stroke={SILK} strokeWidth="1.5">
                <circle cx="809" cy="367" r="7.5" />
                <circle cx="809" cy="416" r="7.5" />
                <path d="M809 363 V371 M805 367 H813 M809 412.5 V419.5 M809 374.5 V388 M809 395 V408.5 M803 384 A9 9 0 0 0 803 398 M815 384 A9 9 0 0 1 815 398" />
                <circle cx="809" cy="391.5" r="2.5" fill={SILK} />
            </g>

            {/* origin marker and dimensions */}
            <path d="M397 307.5 H449 M422.5 281.5 V333" stroke="#9c0a12" strokeWidth="1" />
            <circle cx="422.5" cy="307.5" r="26" fill="none" stroke="#8c0a12" strokeWidth="1.2" />
            <g fill="none" stroke="#c83434" strokeWidth="1.6">
                <path d="M1160 332.5 H1376 M1160 909 H1376 M1370 332.5 V909 M1365 343 L1370 333 L1375 343 M1365 899 L1370 909 L1375 899" />
                <path d="M811 961 V1131 M1108 961 V1131 M811 1126.5 H1108 M821 1121.5 L811 1126.5 L821 1131.5 M1098 1121.5 L1108 1126.5 L1098 1131.5" />
                <path d="M56 597 H58 M56 1141 H58" />
            </g>
            <Silk x={1363} y={621} size={20} fill="#c83434">71.4000 mm</Silk>
            <Silk x={959.5} y={1117.5} size={20} turn={0} fill="#c83434">36.7000 mm</Silk>

            <path d="M409 621.5 H1144" stroke="#c8ccd0" strokeWidth="1.2" opacity=".65" />
            <path d="M55 706 H4000 M1509.5 200 V3000" stroke="#dfe6ea" strokeWidth="1.6" opacity=".4" />
        </g>
    </svg>
);

const Tray = () => (
    <div className="flex items-center justify-end pr-[11px]">
        <Icon size="size-6">
            <circle cx="11" cy="12" r="11" fill="#2aa0dc" />
            <path d="M4 12 L17 6 L15 14 Z" fill="#fff" />
            <circle cx="17" cy="16" r="7.5" fill="#f23c34" />
            <text x="17" y="20" fontSize="11" textAnchor="middle" fill="#fff" fontFamily="Roboto, sans-serif">8</text>
        </Icon>
        <span className="ml-[34px] flex">
            <Icon size="size-6">
                <path d="M7.5 .5 L10.5 4 H17 L20.5 .5 L21 8 L22.5 23 H6 Q0 23 .5 17.5 Q2.5 16 2.3 19 Q3 21 6.3 20.5 L7 8 Z" fill="#4c4a84" />
                <circle cx="10.5" cy="9" r="1.8" fill="#e8e8f4" />
                <circle cx="17.3" cy="9" r="1.8" fill="#e8e8f4" />
                <circle cx="10.8" cy="9" r=".8" fill="#222" />
                <circle cx="17" cy="9" r=".8" fill="#222" />
            </Icon>
        </span>
        <span className="ml-[25px]">en</span>
        <span className="ml-[27px] flex">
            <Icon size="size-6">
                <path d="M3 12 C3 -4 21 -4 21 12 L18 14 L15 11 L12 14 L9 11 L6 14 Z M3 14.5 L6 16.5 L9 13.5 L12 16.5 L15 13.5 L18 16.5 L21 14.5 C20 27 4 27 3 14.5 Z" fill="#fff" />
            </Icon>
        </span>
        <span className="ml-[34px] flex">
            <Icon size="size-6">
                <rect x="2" y="2" width="20" height="21" rx="3" stroke="#fff" strokeWidth="3" />
                <path d="M7 0 H17 V7 H7 Z" fill="#fff" />
            </Icon>
        </span>
        <span className="ml-[39px] flex">
            <Icon size="size-6">
                <path d="M1 9 C7 2.5 17 2.5 23 9 M5 14 C9 9.5 15 9.5 19 14" stroke="#fff" strokeWidth="2.8" />
                <circle cx="12" cy="18.5" r="3" fill="#fff" />
            </Icon>
        </span>
        <span className="ml-[22px] flex">
            <Icon size="size-6">
                <path d="M0 8 H4 L10.5 1.5 V22.5 L4 16 H0 Z" fill="#fff" />
                <path d="M13.5 8 Q16.5 12 13.5 16" stroke="#fff" strokeWidth="2.5" />
                <path d="M17 4.5 Q23 12 17 19.5" stroke="#666" strokeWidth="2.5" />
            </Icon>
        </span>
        <span className="ml-[28px] flex">
            <Icon size="size-6">
                <circle cx="12" cy="12" r="11" fill="#d0131c" />
                <path d="M8 8 L16 16 M16 8 L8 16" stroke="#2a0306" strokeWidth="2.8" />
            </Icon>
        </span>
    </div>
);

const Sidebar = () => (
    <aside className="flex w-72 shrink-0 flex-col overflow-hidden">
        <h2 className="bg-[#2b2b2b] px-[5px] pb-1 font-['Noto_Sans',sans-serif] text-[17px] leading-[22px]">Appearance</h2>
        <section className="mt-2 border border-[#1b1b1b] bg-[#2b2b2b]">
            <div className="flex h-[59px] items-stretch bg-[#282828]">
                <button aria-label="Previous tab" className="w-10 pl-[15px]">
                    <svg viewBox="0 0 10 18" className="h-[18px] w-[10px]"><path d="M10 0 V18 L0 9 Z" fill="#8b8b8b" /></svg>
                </button>
                <button className="flex-1 border-b-[6px] border-[#15539e] pr-[19px] text-right">Layers</button>
                <button aria-label="Next tab" className="w-10 pl-[15px]">
                    <svg viewBox="0 0 10 18" className="h-[18px] w-[10px]"><path d="M0 0 V18 L10 9 Z" fill="#f4f4f0" /></svg>
                </button>
            </div>
            <ul className="grid h-[365px] grid-rows-12 bg-[#464646]">
                {layers.map((layer, i) => (
                    <li key={layer.name} className={clsx('flex items-center', i === 0 && 'bg-[#555555]')}>
                        <span className="flex w-[18px] justify-center">
                            {i === 0 && <svg viewBox="0 0 6 6" className="size-[6px]"><path d="M1 0 L6 3 L1 6 Z" fill="#3f3fe0" /></svg>}
                        </span>
                        <span className={clsx('grid h-6 w-[22px] grid-cols-3 grid-rows-2', layer.color)}>
                            {layer.check && [0, 1, 2, 3, 4, 5].map((n) => <span key={n} className={clsx(n % 2 === 0 && layer.check)} />)}
                        </span>
                        <button aria-label={`Show ${layer.name}`} className="ml-[10px] flex size-[26px] items-center justify-center rounded-full bg-[#3b3b3b]">
                            <svg viewBox="0 0 22 14" className="h-[14px] w-[22px]">
                                <path d="M0 7 Q11 -5.5 22 7 Q11 19.5 0 7 Z" fill={LIGHT} />
                                <circle cx="11" cy="7" r="3.4" fill={LIGHT} stroke="#464646" strokeWidth="1.6" />
                            </svg>
                        </button>
                        <span className="ml-2">{layer.name}</span>
                    </li>
                ))}
            </ul>
            <button className="flex h-[39px] w-full items-center gap-[6px] pb-1 pl-5 whitespace-nowrap">
                <svg viewBox="0 0 8 14" className="h-[14px] w-2 shrink-0"><path d="M0 0 L8 7 L0 14 Z" fill="#f4f4f0" /></svg>
                Layer Display Options
            </button>
        </section>
        <div className="flex flex-col px-3 pt-[13px]">
            <span className="leading-[32px]">Presets (Ctrl+Tab):</span>
            <Combo label="Presets" value="All Layers" className="mt-[3px] h-[54px]" />
            <span className="mt-[2px] leading-[32px]">Viewports (Shift+Tab):</span>
            <Combo label="Viewports" value="——" className="mt-[3px] h-[54px]" />
        </div>
        <h2 className="mt-[18px] bg-[#2b2b2b] px-[5px] pb-1 font-['Noto_Sans',sans-serif] text-[17px] leading-[22px]">Selection Filter</h2>
        <div className="mt-[7px] grid h-[202px] grid-cols-[173px_1fr] grid-rows-6 pl-[14px]">
            {filters.map(([name, on]) => (
                <label key={name} className="flex items-center gap-[6px] whitespace-nowrap">
                    <input
                        type="checkbox"
                        defaultChecked={on}
                        className="size-[26px] shrink-0 appearance-none rounded-[5px] border-2 border-[#151515] bg-[#363636] checked:border-[#1b65c8] checked:bg-[#1b6fdd] checked:bg-[url('data:image/svg+xml,%3Csvg%20xmlns=%22http://www.w3.org/2000/svg%22%20viewBox=%220%200%2022%2022%22%3E%3Cpath%20d=%22M3%2011L9%2016L19%207%22%20fill=%22none%22%20stroke=%22white%22%20stroke-width=%224%22/%3E%3C/svg%3E')]"
                    />
                    {name}
                </label>
            ))}
        </div>
    </aside>
);

const App: React.FC = () => (
    <div className={clsx('flex h-screen flex-col overflow-hidden bg-[#333333] text-[22px] leading-none text-[#eeeeec]', mono)}>
        <header className="grid h-[50px] shrink-0 grid-cols-3 items-center bg-black text-[24px] font-bold text-white">
            <div className="flex items-center gap-2 pl-5 whitespace-nowrap">
                <svg viewBox="0 0 25 25" className="size-[25px]" aria-hidden="true">
                    <rect width="25" height="25" rx="4" fill="#4b4b4b" />
                    <text x="3" y="20" fontSize="19" fontWeight="800" fill="#fff" fontFamily="Open Sans, sans-serif">Ki</text>
                </svg>
                thatmicpre-panels-spilit — PCB Editor
            </div>
            <time className="text-center">Nov 28 15:55</time>
            <Tray />
        </header>

        <nav aria-label="Menu" className="flex h-[45px] shrink-0 items-center gap-[27px] px-[12px] pb-[3px]">
            {menus.map(([before, key, after]) => (
                <button key={key + after}>
                    {before}<span className="underline decoration-2 underline-offset-4">{key}</span>{after}
                </button>
            ))}
        </nav>

        <div role="toolbar" className="flex h-14 shrink-0 items-center gap-[3px] pl-[7px]">
            {topTools.map((tool, i) =>
                tool.name === '|' ? (
                    <div key={i} className="flex w-3 justify-center"><div className="h-9 w-[2px] bg-[#4c4c4c]" /></div>
                ) : (
                    <button key={i} aria-label={tool.name} className="flex size-12 items-center justify-center">{tool.icon}</button>
                )
            )}
        </div>

        <div className="flex h-[68px] shrink-0 items-center gap-2 pb-[3px] pl-2">
            <div className="flex items-center gap-[3px]">
                <Combo label="Track width" value="Track: use netclass width" className="h-[54px] w-[345px]" />
                <button aria-label="Auto track width" className="flex size-12 items-center justify-center border-2 border-[#15539e] bg-[#0a2040]">
                    <Icon>
                        <path d="M2 2 V16 Q2 21 6.5 21 H17.5 Q22 21 22 16 V2" stroke={LIGHT} strokeWidth="1.8" />
                        <path d="M7 9.5 H17 M7 12.9 H17" stroke={LIGHT} strokeWidth="1" />
                        <circle cx="12" cy="21" r="2.4" fill={BLUE} />
                    </Icon>
                </button>
            </div>
            <Divider />
            <Combo label="Via size" value="Via: use netclass sizes" className="h-[54px] w-[345px]" />
            <Divider />
            <Combo label="Active layer" value="F.Cu (PgUp)" className="h-[60px] w-[250px] [&_select]:pl-1">
                <span className="ml-[10px] h-11 w-[45px] shrink-0 border-4 border-black bg-[#c83434]" />
            </Combo>
            <button aria-label="Layer pair" className="mr-[5px] size-[38px]">
                <svg viewBox="0 0 38 38">
                    <path d="M0 0 H38 V38 H0 Z" fill="#4d7fc4" />
                    <path d="M0 0 H27 L10 38 H0 Z" fill="#c83434" />
                    <path d="M25 0 L8 38 M28 0 L11 38 M31 0 L14 38" stroke="#f4f4f0" strokeWidth="1.2" />
                    <path d="M26.5 0 L9.5 38 M29.5 0 L12.5 38" stroke="#222" strokeWidth="1.2" />
                </svg>
            </button>
            <Divider />
            <Combo label="Grid" value="User Grid: 0.2540 mm (10.00 mils)" className="h-[54px] w-[434px]" />
            <Divider />
            <Combo label="Zoom" value="Zoom 1.50" className="h-[54px] w-[189px]" />
        </div>

        <main className="flex min-h-0 flex-1">
            <div className="w-14 shrink-0 pr-[3px]"><ToolColumn tools={leftTools} label="Options" /></div>
            <div className="min-w-0 flex-1 border-r-2 border-[#1c2430] bg-[#001023]"><BoardCanvas /></div>
            <div className="w-[62px] shrink-0 pr-[10px]"><ToolColumn tools={rightTools} label="Tools" /></div>
            <Sidebar />
        </main>

        <dl className="flex h-16 shrink-0 items-center gap-20 pb-1 pl-3 leading-[32px]">
            {[['Pads', '0'], ['Vias', '16'], ['Track Segments', '0'], ['Nets', '1'], ['Unrouted', '1']].map(([name, value]) => (
                <div key={name}><dt>{name}</dt><dd>{value}</dd></div>
            ))}
        </dl>
        <footer className="flex h-[42px] shrink-0 items-center bg-[#353535] pr-[13px] pb-[2px] pl-[152px] whitespace-pre">
            <span className="w-28">Z 1.41</span>
            <span className="w-[292px]">X 237.2360  Y 103.8860</span>
            <span className="w-[492px]">dx 237.2360  dy 103.8860  dist 258.9850</span>
            <span className="w-[347px]">grid 0.2540</span>
            <span>mm</span>
            <span className="ml-auto">Constrain to H, V, 45</span>
        </footer>
    </div>
);

export default App;
